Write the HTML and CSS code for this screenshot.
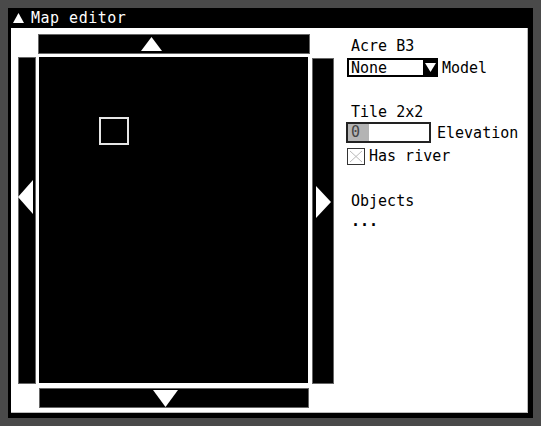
FILE: index.html
```html
<!DOCTYPE html>
<html lang="en">
<head>
    <meta charset="UTF-8">
    <meta name="viewport" content="width=device-width, initial-scale=1.0">
    <title>Map editor</title>
    <link rel="stylesheet" href="styles.css">
</head>
<body>
    <div class="window">
        <div class="titlebar">
            <svg class="title-arrow" width="11" height="10" viewBox="0 0 11 10"><polygon points="5.5,0 11,10 0,10" fill="#fff"/></svg>
            <span>Map editor</span>
        </div>
        <div class="content">
            <div class="editor">
                <div class="side side-left">
                    <svg class="arrow-left" width="15" height="34" viewBox="0 0 15 34"><polygon points="15,0 15,34 0,17" fill="#fff"/></svg>
                </div>
                <div class="middle">
                    <div class="bar bar-top">
                        <svg class="arrow-up" width="21" height="14" viewBox="0 0 21 14"><polygon points="10.5,0 21,14 0,14" fill="#fff"/></svg>
                    </div>
                    <div class="map">
                        <div class="cursor"></div>
                    </div>
                    <div class="bar bar-bottom">
                        <svg class="arrow-down" width="25" height="17" viewBox="0 0 25 17"><polygon points="0,0 25,0 12.5,17" fill="#fff"/></svg>
                    </div>
                </div>
                <div class="side side-right">
                    <svg class="arrow-right" width="15" height="32" viewBox="0 0 15 32"><polygon points="0,0 15,16 0,32" fill="#fff"/></svg>
                </div>
            </div>

            <div class="panel">
                <div class="label">Acre B3</div>
                <div class="row row-model">
                    <div class="select">None</div>
                    <div class="select-btn">
                        <svg width="11" height="9" viewBox="0 0 11 9"><polygon points="0,0 11,0 5.5,9" fill="#fff"/></svg>
                    </div>
                    <span class="field-name">Model</span>
                </div>

                <div class="label label-tile">Tile 2x2</div>
                <div class="row row-elev">
                    <div class="number"><span class="number-fill">0</span></div>
                    <span class="field-name">Elevation</span>
                </div>
                <div class="row row-river">
                    <svg class="check" width="18" height="17" viewBox="0 0 18 17">
                        <rect x="0.5" y="0.5" width="17" height="16" fill="#fff" stroke="#333"/>
                        <path d="M3 3 L15 14 M15 3 L3 14" stroke="#bbb" stroke-width="1"/>
                    </svg>
                    <span class="field-name">Has river</span>
                </div>

                <div class="label label-objects">Objects</div>
                <div class="label dots">...</div>
            </div>
        </div>
    </div>
</body>
</html>
```

FILE: styles.css
```css
body {
    margin: 0;
    padding: 8px;
    background-color: #4a4a4a;
    font-family: "DejaVu Sans Mono", "Liberation Mono", monospace;
    font-size: 15px;
    color: #000;
}
.window {
    width: 525px;
    height: 410px;
    background-color: #000;
    display: flex;
    flex-direction: column;
}
.titlebar {
    height: 20px;
    display: flex;
    align-items: center;
    color: #fff;
    letter-spacing: 0.5px;
    line-height: 20px;
}
.title-arrow {
    margin-left: 5px;
    margin-right: 7px;
}
.content {
    flex: 1;
    margin: 0 5px 5px 3px;
    background-color: #fff;
    border-right: 1px solid #bbb;
    border-bottom: 1px solid #bbb;
    display: flex;
}

/* map area with the four scroll bars */
.editor {
    display: flex;
    padding-left: 7px;
}
.side {
    background-color: #000;
    border: 1px solid #666;
    box-sizing: border-box;
    position: relative;
}
.side-left {
    width: 18px;
    height: 327px;
    margin-top: 29px;
}
.arrow-left {
    position: absolute;
    left: -1px;
    top: 122px;
}
.side-right {
    width: 22px;
    height: 326px;
    margin-top: 30px;
    margin-left: 2px;
}
.arrow-right {
    position: absolute;
    left: 3px;
    top: 127px;
}
.middle {
    width: 272px;
    margin-left: 2px;
    padding-top: 6px;
}
.bar {
    background-color: #000;
    border: 1px solid #666;
    box-sizing: border-box;
    height: 20px;
    display: flex;
}
.bar-top {
    align-items: center;
}
.arrow-up {
    margin-left: 102px;
}
.bar-bottom {
    width: 270px;
    margin-left: 1px;
}
.arrow-down {
    margin-left: 113px;
    margin-top: 1px;
}
.map {
    height: 326px;
    width: 269px;
    margin: 3px 0 5px 1px;
    background-color: #000;
    position: relative;
}
.cursor {
    position: absolute;
    left: 60px;
    top: 60px;
    width: 30px;
    height: 28px;
    box-sizing: border-box;
    border: 2px solid #e6e6e6;
}

/* property panel */
.panel {
    margin-left: 13px;
    padding-top: 9px;
}
.label {
    line-height: 18px;
    padding-left: 4px;
}
.row {
    display: flex;
    align-items: center;
}
.field-name {
    line-height: 18px;
}
.row-model {
    margin-top: 3px;
    height: 19px;
}
.select {
    width: 76px;
    height: 19px;
    box-sizing: border-box;
    border: 2px solid #000;
    border-right: none;
    padding-left: 2px;
    line-height: 16px;
}
.select-btn {
    width: 15px;
    height: 19px;
    background-color: #000;
    display: flex;
    align-items: center;
    justify-content: center;
}
.row-model .field-name {
    margin-left: 4px;
}
.label-tile {
    margin-top: 26px;
}
.row-elev {
    margin-top: 1px;
}
.number {
    width: 85px;
    height: 21px;
    box-sizing: border-box;
    border: 2px solid #222;
    margin-left: -1px;
}
.number-fill {
    display: block;
    width: 21px;
    height: 17px;
    background-color: #b4b4b4;
    padding-left: 3px;
    box-sizing: border-box;
    line-height: 17px;
    color: #444;
}
.row-elev .field-name {
    margin-left: 6px;
}
.row-river {
    margin-top: 4px;
}
.check {
    margin-right: 4px;
}
.label-objects {
    margin-top: 27px;
}
.dots {
    margin-top: 2px;
    font-weight: bold;
}
```
